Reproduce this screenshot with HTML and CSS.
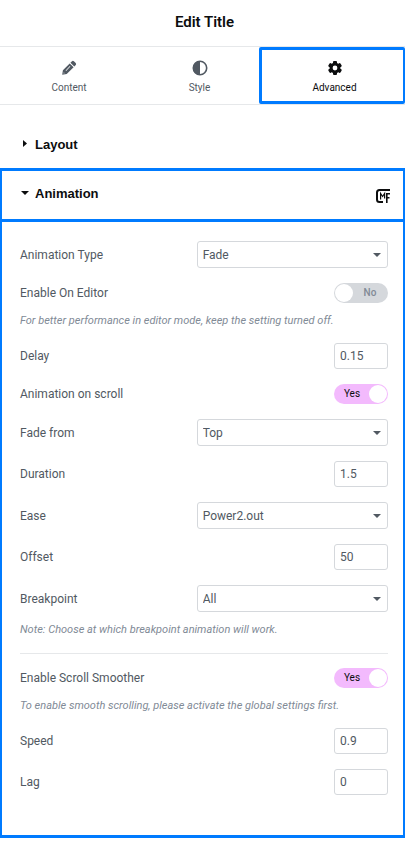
FILE: index.html
```html
<!DOCTYPE html>
<html lang="en">
<head>
<meta charset="utf-8">
<meta name="viewport" content="width=device-width, initial-scale=1">
<title>Edit Title</title>
<link rel="stylesheet" href="styles.css">
</head>
<body>
<header class="header"><h1>Edit Title</h1></header>

<nav class="tabs">
  <button class="tab" type="button">
    <svg width="16" height="16" viewBox="0 0 16 16" aria-hidden="true">
      <path fill="currentColor" fill-rule="evenodd" d="M1.200 14.800 1.900 10.300 8.700 3.400 12.600 7.300 5.700 14.100ZM2.800 12.300 2.600 13.400 3.700 13.200ZM4.600 10.400 5.100 10.900 9.400 6.600 8.900 6.100ZM9.400 2.700 11 1.200Q12 .5 12.900 1.300L14.700 3.100Q15.500 4 14.800 5L13.300 6.600Z"/>
    </svg>
    <span>Content</span>
  </button>
  <button class="tab tab-style" type="button">
    <svg width="16" height="16" viewBox="0 0 16 16" aria-hidden="true">
      <circle cx="8" cy="8" r="6.700" fill="none" stroke="currentColor" stroke-width="1.600"/>
      <path fill="currentColor" d="M8 1a7 7 0 0 0 0 14Z"/>
    </svg>
    <span>Style</span>
  </button>
  <button class="tab tab-active" type="button">
    <svg width="16" height="16" viewBox="0 0 16 16" aria-hidden="true">
      <g fill="currentColor">
        <rect x="6" y="1" width="4" height="14" rx="1"/>
        <rect x="6" y="1" width="4" height="14" rx="1" transform="rotate(60 8 8)"/>
        <rect x="6" y="1" width="4" height="14" rx="1" transform="rotate(120 8 8)"/>
      </g>
      <circle cx="8" cy="8" r="3.900" fill="#fff" stroke="currentColor" stroke-width="3"/>
    </svg>
    <span>Advanced</span>
  </button>
</nav>

<main>
  <button class="section-toggle" type="button" aria-expanded="false">
    <svg width="10" height="10" viewBox="0 0 10 10" aria-hidden="true"><path fill="currentColor" d="M3 0 7 3.500 3 7Z"/></svg>
    <span>Layout</span>
  </button>

  <section class="panel">
    <button class="section-toggle panel-head" type="button" aria-expanded="true">
      <svg width="10" height="10" viewBox="0 0 10 10" aria-hidden="true"><path fill="currentColor" d="M1 2h8L5 6Z"/></svg>
      <span>Animation</span>
      <svg class="brand" width="14" height="14" viewBox="0 0 14 14" aria-hidden="true">
        <g fill="none" stroke="currentColor" stroke-width="2">
          <path d="M14 1H3.500Q1 1 1 3.500V10.500Q1 13 3.500 13H7"/>
          <path stroke-width="1.200" d="M4.600 10.500V4.500L6.600 7.500 8.600 4.500V9.500"/>
          <path stroke-width="1.600" d="M14 4.800H10.800V14M10.800 8.800H13.500"/>
        </g>
      </svg>
    </button>

    <form class="controls">
      <div class="row">
        <label for="type">Animation Type</label>
        <div class="select"><select id="type"><option>Fade</option></select>
          <svg width="8" height="4" viewBox="0 0 8 4" aria-hidden="true"><path fill="currentColor" d="M0 0h8L4 4Z"/></svg></div>
      </div>
      <div class="row">
        <label for="editor">Enable On Editor</label>
        <div class="switch"><input type="checkbox" id="editor"><span>No</span></div>
      </div>
      <p class="note">For better performance in editor mode, keep the setting turned off.</p>
      <div class="row">
        <label for="delay">Delay</label>
        <input class="number" id="delay" type="text" inputmode="decimal" value="0.15">
      </div>
      <div class="row">
        <label for="scroll">Animation on scroll</label>
        <div class="switch"><input type="checkbox" id="scroll" checked><span>Yes</span></div>
      </div>
      <div class="row">
        <label for="from">Fade from</label>
        <div class="select"><select id="from"><option>Top</option></select>
          <svg width="8" height="4" viewBox="0 0 8 4" aria-hidden="true"><path fill="currentColor" d="M0 0h8L4 4Z"/></svg></div>
      </div>
      <div class="row">
        <label for="duration">Duration</label>
        <input class="number" id="duration" type="text" inputmode="decimal" value="1.5">
      </div>
      <div class="row">
        <label for="ease">Ease</label>
        <div class="select"><select id="ease"><option>Power2.out</option></select>
          <svg width="8" height="4" viewBox="0 0 8 4" aria-hidden="true"><path fill="currentColor" d="M0 0h8L4 4Z"/></svg></div>
      </div>
      <div class="row">
        <label for="offset">Offset</label>
        <input class="number" id="offset" type="text" inputmode="decimal" value="50">
      </div>
      <div class="row">
        <label for="breakpoint">Breakpoint</label>
        <div class="select"><select id="breakpoint"><option>All</option></select>
          <svg width="8" height="4" viewBox="0 0 8 4" aria-hidden="true"><path fill="currentColor" d="M0 0h8L4 4Z"/></svg></div>
      </div>
      <p class="note">Note: Choose at which breakpoint animation will work.</p>
      <div class="row row-separated">
        <label for="smoother">Enable Scroll Smoother</label>
        <div class="switch"><input type="checkbox" id="smoother" checked><span>Yes</span></div>
      </div>
      <p class="note">To enable smooth scrolling, please activate the global settings first.</p>
      <div class="row">
        <label for="speed">Speed</label>
        <input class="number" id="speed" type="text" inputmode="decimal" value="0.9">
      </div>
      <div class="row">
        <label for="lag">Lag</label>
        <input class="number" id="lag" type="text" inputmode="decimal" value="0">
      </div>
    </form>
  </section>
</main>
</body>
</html>
```
FILE: styles.css
```css
* {
  box-sizing: border-box;
}

body {
  margin: 0;
  background: #fff;
  color: #515962;
  font: 12px/16px Roboto, sans-serif;
}

button,
input,
select {
  margin: 0;
  color: inherit;
  font: inherit;
}

button {
  border: 0;
  background: none;
  cursor: pointer;
}

.header {
  padding: 12px 0 14px 4px;
  border-bottom: 1px solid #e6e8ea;
  color: #0c0d0e;
  text-align: center;
}

.header h1 {
  margin: 0;
  font-size: 15px;
  font-weight: 600;
  line-height: 20px;
}

.tabs {
  display: grid;
  grid-template-columns: 138fr 121fr 146fr;
  border-bottom: 1px solid #e6e8ea;
}

.tab {
  display: flex;
  flex-direction: column;
  align-items: center;
  gap: 4px;
  height: 57px;
  padding: 13px 0 0;
  font-size: 10px;
}

.tab-style {
  padding-left: 2px;
}

.tab-active {
  padding: 10px 0 0 4px;
  border: 3px solid #007bff;
  border-right-width: 2px;
  border-radius: 2px;
  color: #0c0d0e;
}

.section-toggle {
  display: flex;
  align-items: center;
  gap: 5px;
  width: 100%;
  padding: 30px 20px 13px;
  color: #0c0d0e;
  font-family: "Liberation Sans", Arial, sans-serif;
  font-size: 13px;
  font-weight: 700;
  line-height: 20px;
}

.panel {
  border: solid #007bff;
  border-width: 3px 2px;
}

.panel-head {
  height: 51px;
  padding: 0 13px 2px 18px;
  border-bottom: 3px solid #007bff;
}

.brand {
  margin: 3px 0 0 auto;
}

.controls {
  display: flex;
  flex-direction: column;
  gap: 15px;
  padding: 19px 15px 40px 18px;
}

.row {
  display: flex;
  align-items: center;
  justify-content: space-between;
}

.row-separated {
  margin-top: 1px;
  padding-top: 14px;
  border-top: 1px solid #e6e8ea;
}

.note {
  margin: -5px 0 -1px;
  color: #818a96;
  font-size: 11px;
  font-style: italic;
}

.select {
  position: relative;
  width: 52%;
}

.select select {
  display: block;
  width: 100%;
  height: 27px;
  padding: 0 20px 0 5px;
  border: 1px solid #d5d8dc;
  border-radius: 3px;
  background: #fff;
  appearance: none;
}

.select svg {
  position: absolute;
  top: 12px;
  right: 7px;
  pointer-events: none;
}

.number {
  width: 54px;
  height: 26px;
  padding: 0 5px;
  border: 1px solid #d5d8dc;
  border-radius: 3px;
  background: #fff;
}

.switch {
  position: relative;
  width: 54px;
  height: 20px;
}

.switch input {
  display: flex;
  width: 100%;
  height: 100%;
  padding: 1px;
  border-radius: 10px;
  background: #d5d8dc;
  appearance: none;
}

.switch input::before {
  width: 18px;
  height: 18px;
  border-radius: 50%;
  background: #fff;
  content: "";
}

.switch input:checked {
  justify-content: flex-end;
  background: #f3bafd;
}

.switch span {
  position: absolute;
  top: 2px;
  right: 0;
  width: 36px;
  color: #818a96;
  font-size: 10px;
  font-weight: 500;
  text-align: center;
  pointer-events: none;
}

.switch input:checked + span {
  right: auto;
  left: 0;
  color: #0c0d0e;
  font-weight: 400;
}
```
